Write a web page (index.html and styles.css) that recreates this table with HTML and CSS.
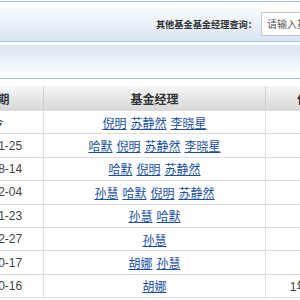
FILE: index.html
```html
<!DOCTYPE html>
<html lang="zh-CN">
<head>
<meta charset="utf-8">
<title>基金经理变动一览</title>
<link rel="stylesheet" href="styles.css">
</head>
<body>
<div class="page">
  <div class="search-bar">
    <label class="search-label" for="q">其他基金基金经理查询：</label>
    <input class="search-input" id="q" type="text" placeholder="请输入基金代码、名称或简拼">
  </div>
  <div class="sub-bar"></div>
  <table class="managers">
    <colgroup>
      <col class="c-start"><col class="c-end"><col class="c-name"><col class="c-term"><col class="c-ret">
    </colgroup>
    <thead>
      <tr><th>起始期</th><th>截止期</th><th>基金经理</th><th>任职期间</th><th>任职回报</th></tr>
    </thead>
    <tbody>
      <tr><td>2021-01-26</td><td>至今</td><td><div class="names"><a href="#">倪明</a><a href="#">苏静然</a><a href="#">李晓星</a></div></td><td>215天</td><td>3.12%</td></tr>
      <tr><td>2020-08-15</td><td>2021-01-25</td><td><div class="names"><a href="#">哈默</a><a href="#">倪明</a><a href="#">苏静然</a><a href="#">李晓星</a></div></td><td>163天</td><td>18.40%</td></tr>
      <tr><td>2019-12-05</td><td>2020-08-14</td><td><div class="names"><a href="#">哈默</a><a href="#">倪明</a><a href="#">苏静然</a></div></td><td>253天</td><td>21.76%</td></tr>
      <tr><td>2018-01-24</td><td>2019-12-04</td><td><div class="names"><a href="#">孙慧</a><a href="#">哈默</a><a href="#">倪明</a><a href="#">苏静然</a></div></td><td>680天</td><td>9.85%</td></tr>
      <tr><td>2017-12-28</td><td>2018-01-23</td><td><div class="names"><a href="#">孙慧</a><a href="#">哈默</a></div></td><td>27天</td><td>1.02%</td></tr>
      <tr><td>2016-10-18</td><td>2017-12-27</td><td><div class="names"><a href="#">孙慧</a></div></td><td>435天</td><td>12.63%</td></tr>
      <tr><td>2015-10-17</td><td>2016-10-17</td><td><div class="names"><a href="#">胡娜</a><a href="#">孙慧</a></div></td><td>367天</td><td>4.21%</td></tr>
      <tr><td>2013-10-18</td><td>2015-10-16</td><td><div class="names"><a href="#">胡娜</a></div></td><td>1年又364天</td><td>30.57%</td></tr>
    </tbody>
  </table>
</div>
</body>
</html>
```
FILE: styles.css
```css
html, body {
  margin: 0;
  padding: 0;
  overflow: hidden;
  background: #fff;
}
body {
  font-family: "Liberation Sans", "Noto Sans CJK SC", sans-serif;
  font-size: 12px;
  color: #333;
}
.page {
  width: 640px;
  margin-left: -165px;
  padding-top: 1px;
}
.search-bar {
  display: flex;
  justify-content: flex-end;
  align-items: center;
  gap: 4px;
  height: 34px;
  padding: 5px 64px 0 0;
  border-top: 1px solid #a3c5e6;
  border-bottom: 1px solid #a3c5e6;
  background: linear-gradient(#ffffff, #d9e5f3);
}
.search-label {
  font-size: 9.2px;
  font-weight: bold;
  color: #333;
}
.search-input {
  box-sizing: border-box;
  width: 150px;
  height: 24px;
  margin: 0;
  padding: 0 5px;
  border: 1px solid #c8c8c8;
  background: #fff;
  font-family: "Liberation Sans", "Noto Sans CJK SC", sans-serif;
  font-size: 10px;
}
.search-input::placeholder {
  color: #555;
}
.sub-bar {
  margin-top: 3px;
  height: 33px;
  border-bottom: 1px solid #a3c5e6;
  background: linear-gradient(#d9e5f3, #ffffff);
}
.managers {
  margin-top: 7px;
  border-collapse: collapse;
  table-layout: fixed;
  width: 640px;
}
.c-start { width: 104px; }
.c-end { width: 104px; }
.c-name { width: 222px; }
.c-term { width: 111px; }
.c-ret { width: 99px; }
.managers th {
  height: 24px;
  padding: 0;
  font-weight: bold;
  color: #333;
  text-align: center;
  background: linear-gradient(#f6f6f6, #d8d8d8);
  border-left: 1px solid #e6e6e6;
  border-right: 1px solid #cfcfcf;
  border-bottom: 1px solid #dcdcdc;
}
.managers td {
  height: 22.4px;
  padding: 0;
  text-align: center;
  color: #444;
  border: 1px solid #dedede;
  white-space: nowrap;
}
.names {
  display: flex;
  justify-content: center;
  gap: 4px;
}
.names a {
  color: #1a4fa0;
  text-decoration: underline;
}
```
